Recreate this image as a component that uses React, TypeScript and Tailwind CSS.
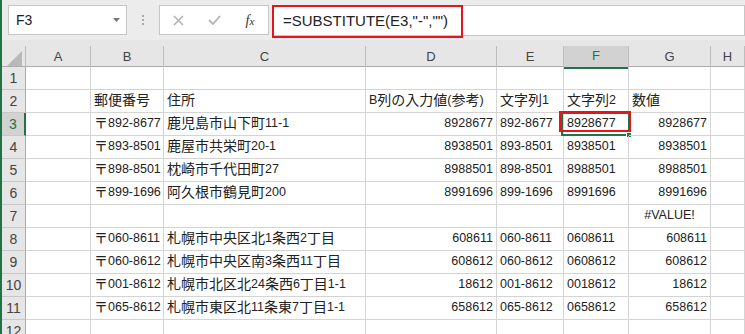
import React from 'react';

const FONT = '"Liberation Sans", "Noto Sans CJK JP", sans-serif';

type Cell = { v: string; a?: 'l' | 'r' | 'c' };

const rows: Cell[][] = [
    [],
    [{ v: '郵便番号' }, { v: '住所' }, { v: 'B列の入力値(参考)' }, { v: '文字列1' }, { v: '文字列2' }, { v: '数値' }],
    [{ v: '〒892-8677' }, { v: '鹿児島市山下町11-1' }, { v: '8928677', a: 'r' }, { v: '892-8677' }, { v: '8928677' }, { v: '8928677', a: 'r' }],
    [{ v: '〒893-8501' }, { v: '鹿屋市共栄町20-1' }, { v: '8938501', a: 'r' }, { v: '893-8501' }, { v: '8938501' }, { v: '8938501', a: 'r' }],
    [{ v: '〒898-8501' }, { v: '枕崎市千代田町27' }, { v: '8988501', a: 'r' }, { v: '898-8501' }, { v: '8988501' }, { v: '8988501', a: 'r' }],
    [{ v: '〒899-1696' }, { v: '阿久根市鶴見町200' }, { v: '8991696', a: 'r' }, { v: '899-1696' }, { v: '8991696' }, { v: '8991696', a: 'r' }],
    [{ v: '' }, { v: '' }, { v: '' }, { v: '' }, { v: '' }, { v: '#VALUE!', a: 'c' }],
    [{ v: '〒060-8611' }, { v: '札幌市中央区北1条西2丁目' }, { v: '608611', a: 'r' }, { v: '060-8611' }, { v: '0608611' }, { v: '608611', a: 'r' }],
    [{ v: '〒060-8612' }, { v: '札幌市中央区南3条西11丁目' }, { v: '608612', a: 'r' }, { v: '060-8612' }, { v: '0608612' }, { v: '608612', a: 'r' }],
    [{ v: '〒001-8612' }, { v: '札幌市北区北24条西6丁目1-1' }, { v: '18612', a: 'r' }, { v: '001-8612' }, { v: '0018612' }, { v: '18612', a: 'r' }],
    [{ v: '〒065-8612' }, { v: '札幌市東区北11条東7丁目1-1' }, { v: '658612', a: 'r' }, { v: '065-8612' }, { v: '0658612' }, { v: '658612', a: 'r' }],
    [],
];

const letters = ['A', 'B', 'C', 'D', 'E', 'F', 'G', 'H'];

// CJK glyphs are drawn a bit larger than latin, like MS PGothic
function Txt({ s }: { s: string }) {
    const parts = s.split(/([\u3000-\u30ff\u4e00-\u9fff\uff00-\uffef]+)/);
    return (
        <>
            {parts.map((p, i) =>
                i % 2 === 1 ? (
                    <span key={i} className="text-[14px]">{p}</span>
                ) : (
                    <span key={i}>{p}</span>
                )
            )}
        </>
    );
}

function FormulaBar() {
    return (
        <div className="flex h-[40px] items-start bg-[#ececec] pt-[5px]">
            <div className="ml-[6px] flex h-[30px] w-[119px] items-center justify-between border border-[#c6c6c6] bg-white pl-[7px] pr-[6px]">
                <span className="text-[14px] text-[#222]">F3</span>
                <svg width="7" height="4" viewBox="0 0 7 4"><path d="M0 0h7L3.5 4z" fill="#777" /></svg>
            </div>
            <div className="flex h-[30px] w-[32px] items-center justify-center">
                <svg width="2" height="10" viewBox="0 0 2 10">
                    <rect x="0" y="0" width="2" height="2" fill="#aaa" />
                    <rect x="0" y="4" width="2" height="2" fill="#aaa" />
                    <rect x="0" y="8" width="2" height="2" fill="#aaa" />
                </svg>
            </div>
            <div className="flex h-[30px] w-[110px] items-center border border-[#c6c6c6] bg-white">
                <div className="flex w-[36px] justify-center pl-[1px]">
                    <svg width="11" height="11" viewBox="0 0 11 11"><path d="M1 1l9 9M10 1l-9 9" stroke="#b4b4b4" strokeWidth="1.6" /></svg>
                </div>
                <div className="flex w-[36px] justify-center">
                    <svg width="13" height="10" viewBox="0 0 13 10"><path d="M1 5l4 4 7-8" stroke="#b4b4b4" strokeWidth="1.8" fill="none" /></svg>
                </div>
                <div className="flex w-[36px] justify-center">
                    <span className="text-[14px] italic text-[#333]" style={{ fontFamily: '"Liberation Serif", serif' }}>
                        f<span className="text-[11px]">x</span>
                    </span>
                </div>
            </div>
            <div className="ml-[3px] flex h-[31px] flex-1 border border-[#c6c6c6] bg-white">
                <div className="-mt-[1px] -ml-[1px] flex h-[33px] w-[191px] items-center border-2 border-[#e8141c] pl-[9px] text-[15px] text-[#222]">
                    =SUBSTITUTE(E3,"-","")
                </div>
            </div>
        </div>
    );
}

const grid = 'grid grid-cols-[24px_65px_73px_202px_131px_67px_65px_82px_1fr]';

function HeaderRow() {
    return (
        <div className={`${grid} h-[27px] border-b border-[#ababab] bg-[#e6e6e6] text-[13px] text-[#444]`}>
            <div className="mt-[6px] flex items-end justify-end border-r border-[#bdbdbd] pb-[3px] pr-[3px]">
                <svg width="15" height="15" viewBox="0 0 15 15"><path d="M15 0v15H0z" fill="#b9b9b9" /></svg>
            </div>
            {letters.map((l) =>
                l === 'F' ? (
                    <div key={l} className="mt-[6px] flex items-center justify-center border-r border-b-2 border-[#bdbdbd] border-b-[#217346] bg-[#d2d2d2] pb-[1px] text-[#217346]">
                        {l}
                    </div>
                ) : (
                    <div key={l} className="mt-[6px] flex items-center justify-center border-r border-[#bdbdbd] pb-[1px]">
                        {l}
                    </div>
                )
            )}
        </div>
    );
}

function DataRow({ n, cells }: { n: number; cells: Cell[] }) {
    const sel = n === 3;
    const all: Cell[] = [{ v: '' }, ...cells];
    while (all.length < 8) all.push({ v: '' });
    return (
        <div className={`${grid} h-[23px] text-[12.5px] text-[#222]`}>
            <div
                className={
                    sel
                        ? 'flex items-center justify-center border-r-2 border-b border-[#c8c8c8] border-r-[#217346] bg-[#d2d2d2] text-[14px] text-[#217346]'
                        : 'flex items-center justify-center border-r border-b border-[#c8c8c8] border-r-[#ababab] bg-[#e6e6e6] text-[14px] text-[#444]'
                }
            >
                {n}
            </div>
            {all.map((c, i) => {
                const align = c.a === 'r' ? 'justify-end' : c.a === 'c' ? 'justify-center' : 'justify-start';
                const isF3 = sel && i === 5;
                return (
                    <div key={i} className={`relative flex items-center whitespace-nowrap border-r border-b border-[#d4d4d4] px-[3px] pb-[1px] ${align}`}>
                        <Txt s={c.v} />
                        {isF3 && (
                            <>
                                <div className="absolute -top-[1px] -bottom-[1px] -left-[3px] -right-[2px] border-2 border-[#217346]" />
                                <div className="absolute -top-[2px] bottom-[3px] -left-[5px] -right-[3px] border-2 border-[#e8141c]" />
                                <div className="absolute -bottom-[3px] -right-[4px] h-[6px] w-[6px] border border-white bg-[#217346]" />
                            </>
                        )}
                    </div>
                );
            })}
        </div>
    );
}

export default function App() {
    return (
        <div className="h-[334px] w-[745px] overflow-hidden border-l-2 border-[#217346] bg-white" style={{ fontFamily: FONT }}>
            <FormulaBar />
            <HeaderRow />
            {rows.map((r, i) => (
                <DataRow key={i} n={i + 1} cells={r} />
            ))}
        </div>
    );
}
